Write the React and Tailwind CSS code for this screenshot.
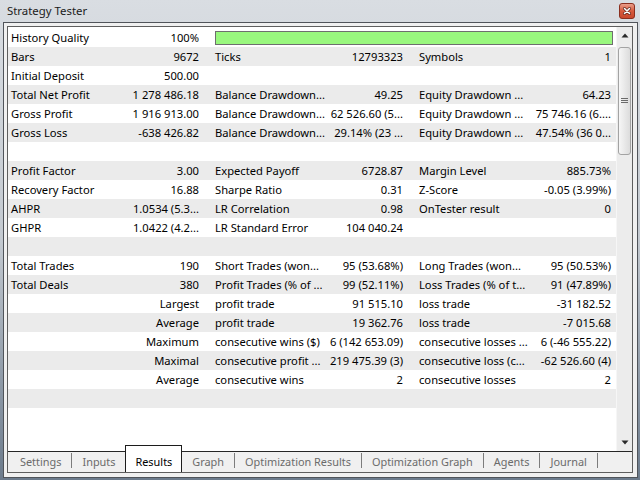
import React from 'react'

const rows = [
  ['History Quality', '100%', 'bar'],
  ['Bars', '9672', 'Ticks', '12793323', 'Symbols', '1'],
  ['Initial Deposit', '500.00', '', '', '', ''],
  ['Total Net Profit', '1 278 486.18', 'Balance Drawdown...', '49.25', 'Equity Drawdown ...', '64.23'],
  ['Gross Profit', '1 916 913.00', 'Balance Drawdown...', '62 526.60 (5...', 'Equity Drawdown ...', '75 746.16 (6....'],
  ['Gross Loss', '-638 426.82', 'Balance Drawdown...', '29.14% (23 ...', 'Equity Drawdown ...', '47.54% (36 0...'],
  ['', '', '', '', '', ''],
  ['Profit Factor', '3.00', 'Expected Payoff', '6728.87', 'Margin Level', '885.73%'],
  ['Recovery Factor', '16.88', 'Sharpe Ratio', '0.31', 'Z-Score', '-0.05 (3.99%)'],
  ['AHPR', '1.0534 (5.3...', 'LR Correlation', '0.98', 'OnTester result', '0'],
  ['GHPR', '1.0422 (4.2...', 'LR Standard Error', '104 040.24', '', ''],
  ['', '', '', '', '', ''],
  ['Total Trades', '190', 'Short Trades (won...', '95 (53.68%)', 'Long Trades (won...', '95 (50.53%)'],
  ['Total Deals', '380', 'Profit Trades (% of ...', '99 (52.11%)', 'Loss Trades (% of t...', '91 (47.89%)'],
  ['', 'Largest', 'profit trade', '91 515.10', 'loss trade', '-31 182.52'],
  ['', 'Average', 'profit trade', '19 362.76', 'loss trade', '-7 015.68'],
  ['', 'Maximum', 'consecutive wins ($)', '6 (142 653.09)', 'consecutive losses ...', '6 (-46 555.22)'],
  ['', 'Maximal', 'consecutive profit ...', '219 475.39 (3)', 'consecutive loss (c...', '-62 526.60 (4)'],
  ['', 'Average', 'consecutive wins', '2', 'consecutive losses', '2'],
  ['', '', '', '', '', ''],
]

const tabs = ['Settings', 'Inputs', 'Results', 'Graph', 'Optimization Results', 'Optimization Graph', 'Agents', 'Journal']

function CloseButton() {
  return (
    <svg width="16" height="16" viewBox="0 0 16 16">
      <defs>
        <linearGradient id="cb" x1="0" y1="0" x2="0" y2="1">
          <stop offset="0" stopColor="#eba28f" />
          <stop offset="0.5" stopColor="#d65a3e" />
          <stop offset="1" stopColor="#c8462b" />
        </linearGradient>
      </defs>
      <rect x="0.5" y="0.5" width="15" height="15" rx="2.5" fill="url(#cb)" stroke="#8a2f1f" />
      <path d="M5.5 5.5 L10.5 10.5 M10.5 5.5 L5.5 10.5" stroke="#5a2218" strokeWidth="3" strokeLinecap="round" />
      <path d="M5.5 5.5 L10.5 10.5 M10.5 5.5 L5.5 10.5" stroke="#ffffff" strokeWidth="1.6" strokeLinecap="round" />
    </svg>
  )
}

function Row({ cells, i }) {
  const bg = i % 2 === 1 ? 'bg-[#ebebeb]' : 'bg-white'
  if (cells[2] === 'bar') {
    return (
      <div className={`flex h-[19px] leading-[19px] ${bg}`}>
        <div className="w-[124px] pl-[3px] overflow-hidden whitespace-nowrap">{cells[0]}</div>
        <div className="w-[80px] pr-[13px] text-right overflow-hidden whitespace-nowrap">{cells[1]}</div>
        <div className="flex-1 pl-[3px] pr-[3px] pt-[3px]">
          <div className="h-[14px] border border-[#6e6e6e] bg-[#99f77e]" />
        </div>
      </div>
    )
  }
  return (
    <div className={`flex h-[19px] leading-[19px] ${bg}`}>
      <div className="w-[124px] pl-[3px] overflow-hidden whitespace-nowrap">{cells[0]}</div>
      <div className="w-[80px] pr-[13px] text-right overflow-hidden whitespace-nowrap">{cells[1]}</div>
      <div className="w-[116px] pl-[3px] overflow-hidden whitespace-nowrap">{cells[2]}</div>
      <div className="w-[88px] pr-[13px] text-right overflow-hidden whitespace-nowrap">{cells[3]}</div>
      <div className="w-[114px] pl-[3px] overflow-hidden whitespace-nowrap">{cells[4]}</div>
      <div className="w-[86px] pr-[5px] text-right overflow-hidden whitespace-nowrap">{cells[5]}</div>
    </div>
  )
}

function Scrollbar() {
  return (
    <div className="w-[16px] bg-[#ececec] border-l border-[#f6f6f6] flex flex-col">
      <div className="h-[17px] flex items-center justify-center">
        <svg width="8" height="5" viewBox="0 0 8 5"><path d="M4 0.5 L7.5 4.5 L0.5 4.5 Z" fill="#2a2a2a" /></svg>
      </div>
      <div className="mt-[3px] ml-[1px] w-[13px] h-[108px] rounded-[3px] border border-[#a3a3a3] bg-gradient-to-r from-[#f6f6f6] to-[#dcdcdc] flex items-center justify-center">
        <svg width="7" height="6" viewBox="0 0 7 6">
          <path d="M0 0.5 H7 M0 2.5 H7 M0 4.5 H7" stroke="#6a6a6a" strokeWidth="1" />
        </svg>
      </div>
      <div className="flex-1" />
      <div className="h-[17px] flex items-center justify-center">
        <svg width="8" height="5" viewBox="0 0 8 5"><path d="M0.5 0.5 L7.5 0.5 L4 4.5 Z" fill="#2a2a2a" /></svg>
      </div>
    </div>
  )
}

function Tabs() {
  const items = []
  tabs.forEach((t, i) => {
    if (t === 'Results') {
      items.push(
        <div key={t} className="relative z-10 -mt-[7px] h-[27px] self-start bg-white border border-b-0 border-[#1c1c1c] px-[9px] pt-[6px] leading-[19px] text-black">
          {t}
        </div>
      )
    } else {
      items.push(
        <div key={t} className="px-[10px] leading-[20px] text-[#6b6b6b]">{t}</div>
      )
      const next = tabs[i + 1]
      if (next !== 'Results') {
        items.push(<div key={t + '-sep'} className="w-[1px] h-[15px] mt-[1px] self-start bg-[#7c7c7c]" />)
      }
    }
  })
  return <div className="h-[20px] bg-[#f0f0f0] flex pl-[2px] text-[10.9px]">{items}</div>
}

export default function App() {
  return (
    <div
      className="w-[640px] h-[480px] overflow-hidden bg-gradient-to-b from-[#d9dde2] via-[#c3c9d0] to-[#6c7b8c] text-[11.2px] text-black"
      style={{ fontFamily: '"Noto Sans", "Open Sans", sans-serif' }}
    >
      <div className="h-[22px] flex items-center justify-between pl-[7px] pr-[5px]">
        <span className="text-[#1b1b1b] leading-[22px] text-[11.4px]">Strategy Tester</span>
        <CloseButton />
      </div>
      <div className="flex">
        <div className="w-[3px]" />
        <div className="w-[635px] h-[456px] border border-[#50545a] bg-[#f0f0f0] pt-[3px] pl-[3px] pr-[4px] pb-[4px]">
          <div className="h-[447px] border border-[#5e5e5e] bg-white flex flex-col">
            <div className="h-[424px] flex">
              <div className="w-[608px] pt-[1px]">
                {rows.map((r, i) => (
                  <Row key={i} cells={r} i={i} />
                ))}
              </div>
              <Scrollbar />
            </div>
            <div className="h-[1px] bg-[#262626]" />
            <Tabs />
          </div>
        </div>
      </div>
    </div>
  )
}
